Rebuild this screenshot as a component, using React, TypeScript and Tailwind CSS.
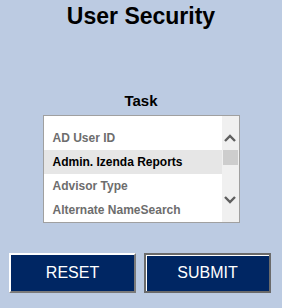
const tasks = ['AD User ID', 'Admin. Izenda Reports', 'Advisor Type', 'Alternate NameSearch']

function Chevron({ up }: { up?: boolean }) {
  return (
    <svg width="12" height="8" viewBox="0 0 12 8" className="block">
      <path
        d={up ? 'M1 7 L6 2 L11 7' : 'M1 1 L6 6 L11 1'}
        fill="none"
        stroke="#5f5f5f"
        strokeWidth="2.4"
      />
    </svg>
  )
}

export default function App() {
  return (
    <div className="w-[282px] h-[308px] bg-[#bccbe2] flex flex-col items-center font-['Liberation_Sans',Arial,sans-serif]">
      <h1 className="mt-[3px] text-[23px] leading-[26px] font-bold text-black">User Security</h1>

      <div className="mt-[63px] text-[15px] leading-[17px] font-bold text-black">Task</div>

      <div className="mt-[6px] w-[197px] h-[108px] border border-[#a0a0a0] bg-white flex overflow-hidden">
        <ul className="flex-1 pt-[10px]">
          {tasks.map((t, i) => (
            <li
              key={t}
              className={
                i === 1
                  ? 'h-[24px] pl-[9px] flex items-center text-[12px] font-bold text-black bg-[#e6e6e6] whitespace-nowrap'
                  : 'h-[24px] pl-[9px] flex items-center text-[12px] font-bold text-[#6d6d6d] whitespace-nowrap'
              }
            >
              {t}
            </li>
          ))}
        </ul>
        <div className="w-[17px] bg-[#f0f0f0] relative">
          <div className="absolute left-[2px] top-[18px]">
            <Chevron up />
          </div>
          <div className="absolute left-[1px] top-[34px] w-[15px] h-[15px] bg-[#cdcdcd]" />
          <div className="absolute left-[2px] top-[80px]">
            <Chevron />
          </div>
        </div>
      </div>

      <div className="mt-[30px] flex gap-[8px] -ml-[2px]">
        <button className="w-[127px] h-[40px] bg-[#002663] text-white text-[16px] border-2 border-t-white border-l-white border-r-[#7a7a7a] border-b-[#7a7a7a]">
          RESET
        </button>
        <button className="w-[127px] h-[40px] bg-[#002663] text-white text-[16px] border-2 border-[#6a6a6a] shadow-[inset_1px_1px_0_#ffffff]">
          SUBMIT
        </button>
      </div>
    </div>
  )
}
